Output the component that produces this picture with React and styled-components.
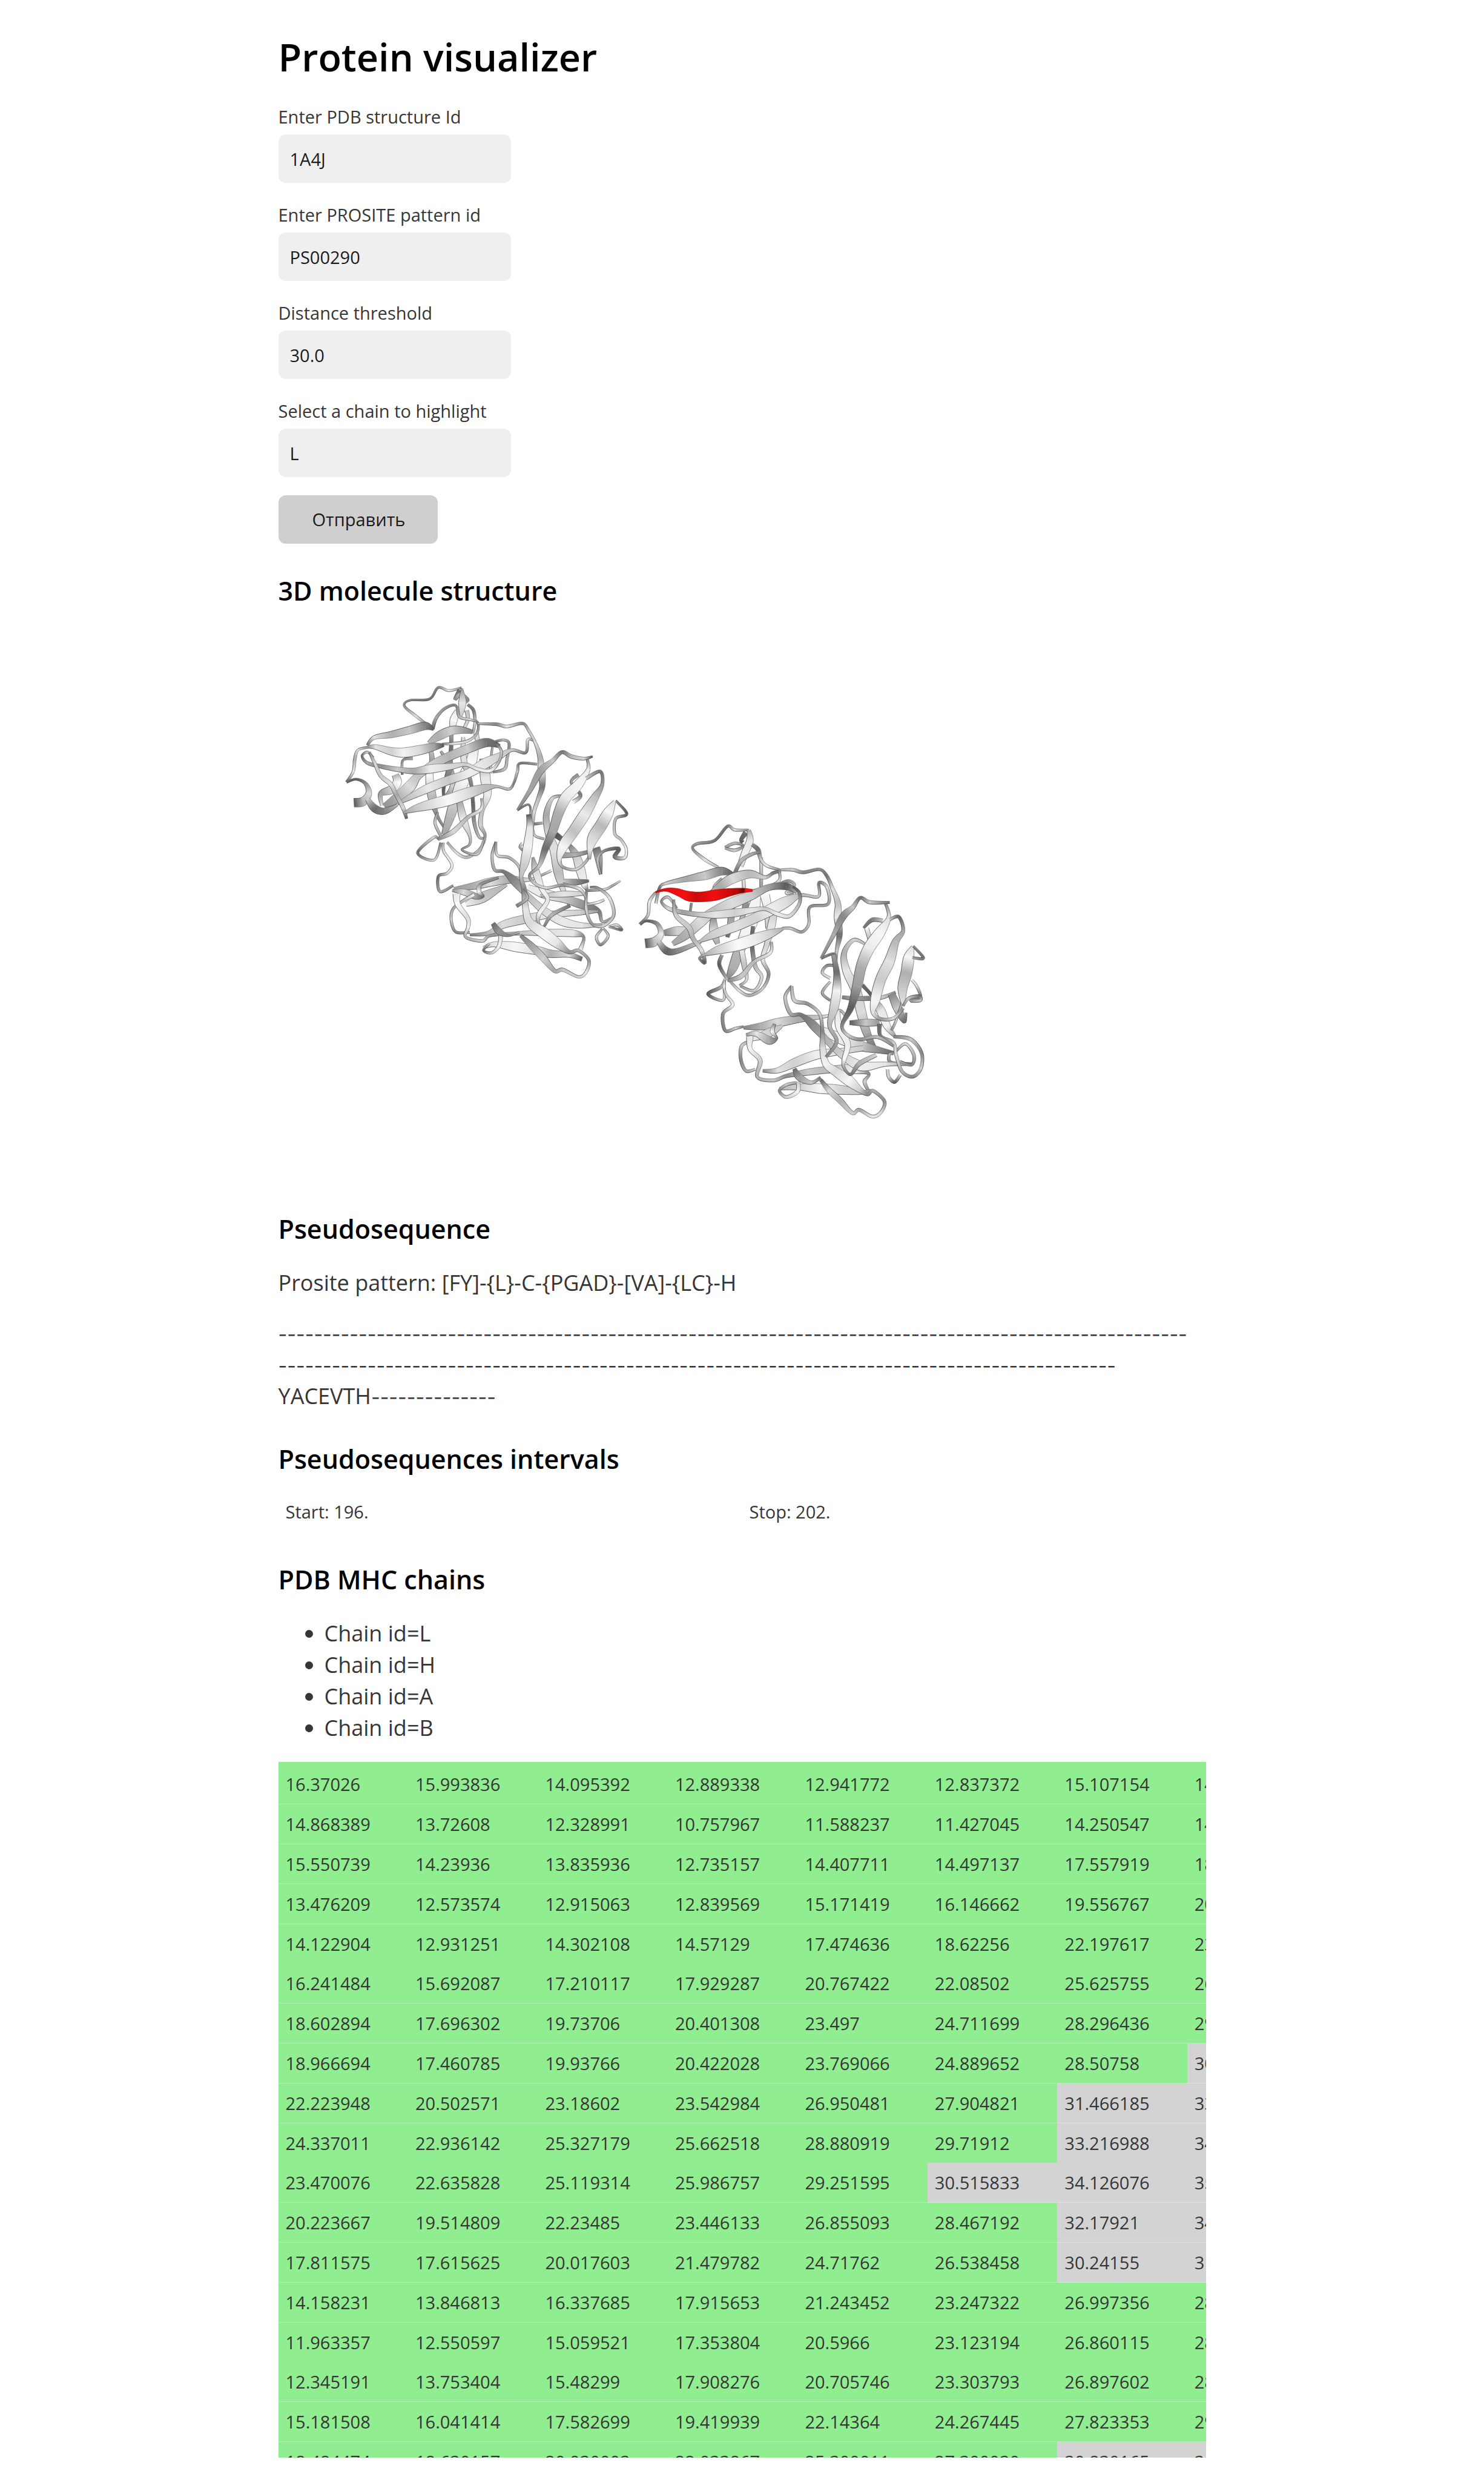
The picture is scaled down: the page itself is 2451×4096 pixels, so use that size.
import React from "react";
import styled, { createGlobalStyle } from "styled-components";

const GlobalStyle = createGlobalStyle`
  *, *::before, *::after { box-sizing: border-box; }
  html, body { margin: 0; padding: 0; background: #fff; }
  body {
    font-family: "Open Sans", "Noto Sans", sans-serif;
    font-size: 36px;
    line-height: 52px;
    color: #363636;
  }
`;

const Page = styled.main`
  max-width: 1532px;
  margin: 0 auto;
  padding: 54px 0 38px;
`;

const Title = styled.h1`
  margin: 0 0 40px;
  font-size: 63px;
  line-height: 80px;
  font-weight: 600;
  color: #000;
`;

const SectionTitle = styled.h2`
  margin: ${(p) => p.$top}px 0 ${(p) => p.$bottom}px;
  font-size: 43px;
  line-height: 56px;
  font-weight: 600;
  color: #000;
`;

const Form = styled.form`
  display: flex;
  flex-direction: column;
  align-items: flex-start;
  gap: 34px;
`;

const Field = styled.div`
  display: flex;
  flex-direction: column;
  gap: 10px;
  width: 384px;
`;

const Label = styled.label`
  font-size: 29px;
  line-height: 38px;
`;

const Input = styled.input`
  width: 100%;
  padding: 20px 19px;
  border: 0;
  border-radius: 12px;
  background: #efefef;
  color: #1b1b1b;
  font: inherit;
  font-size: 29px;
  line-height: 40px;
  height: 80px;
`;

const Submit = styled.button`
  margin-top: -4px;
  padding: 20px 56px;
  width: 263px;
  border: 0;
  border-radius: 12px;
  background: #cfcfcf;
  color: #1b1b1b;
  font: inherit;
  font-size: 29px;
  line-height: 40px;
`;

const Viewer = styled.svg`
  display: block;
  width: 100%;
  height: auto;
  margin: 20px 0;
`;

const Paragraph = styled.p`
  margin: 0 0 31px;
`;

const Sequence = styled.p`
  margin: 0;
  padding-right: 24px;
  overflow-wrap: anywhere;
`;

const Gap = styled.span`
  font-family: Inter, "Open Sans", sans-serif;
  font-size: 32px;
  line-height: 32px;
`;

const Intervals = styled.table`
  width: 100%;
  table-layout: fixed;
  border-spacing: 0;
  font-size: 29px;
  line-height: 38px;

  td { padding: 0 12px; }
`;

const ChainList = styled.ul`
  margin: 0 0 30px;
  padding-left: 76px;
`;

const MatrixScroll = styled.div`
  max-height: 1149px;
  overflow: hidden;
`;

const Matrix = styled.table`
  width: 112%;
  table-layout: fixed;
  border-spacing: 0;
  font-size: 29px;
  line-height: 38px;

  tr:nth-child(5n) td { border-bottom: 0; }
  tr:first-child td { padding-top: 18px; }
`;

const Distance = styled.td`
  padding: 14px 12px 13px;
  border-bottom: 1px solid rgba(255, 255, 255, 0.28);
  background: ${(p) => (p.$near ? "#90ee90" : "#d3d3d3")};
`;

const FIELDS = [
  { id: "pdb", label: "Enter PDB structure Id", value: "1A4J" },
  { id: "prosite", label: "Enter PROSITE pattern id", value: "PS00290" },
  { id: "threshold", label: "Distance threshold", value: "30.0" },
  { id: "chain", label: "Select a chain to highlight", value: "L" },
];

const THRESHOLD = 30;

const DISTANCES = [
  ["16.37026", "15.993836", "14.095392", "12.889338", "12.941772", "12.837372", "15.107154", "14"],
  ["14.868389", "13.72608", "12.328991", "10.757967", "11.588237", "11.427045", "14.250547", "14"],
  ["15.550739", "14.23936", "13.835936", "12.735157", "14.407711", "14.497137", "17.557919", "18"],
  ["13.476209", "12.573574", "12.915063", "12.839569", "15.171419", "16.146662", "19.556767", "20"],
  ["14.122904", "12.931251", "14.302108", "14.57129", "17.474636", "18.62256", "22.197617", "23"],
  ["16.241484", "15.692087", "17.210117", "17.929287", "20.767422", "22.08502", "25.625755", "26"],
  ["18.602894", "17.696302", "19.73706", "20.401308", "23.497", "24.711699", "28.296436", "29"],
  ["18.966694", "17.460785", "19.93766", "20.422028", "23.769066", "24.889652", "28.50758", "30"],
  ["22.223948", "20.502571", "23.18602", "23.542984", "26.950481", "27.904821", "31.466185", "33"],
  ["24.337011", "22.936142", "25.327179", "25.662518", "28.880919", "29.71912", "33.216988", "34"],
  ["23.470076", "22.635828", "25.119314", "25.986757", "29.251595", "30.515833", "34.126076", "35"],
  ["20.223667", "19.514809", "22.23485", "23.446133", "26.855093", "28.467192", "32.17921", "34"],
  ["17.811575", "17.615625", "20.017603", "21.479782", "24.71762", "26.538458", "30.24155", "31"],
  ["14.158231", "13.846813", "16.337685", "17.915653", "21.243452", "23.247322", "26.997356", "28"],
  ["11.963357", "12.550597", "15.059521", "17.353804", "20.5966", "23.123194", "26.860115", "28"],
  ["12.345191", "13.753404", "15.48299", "17.908276", "20.705746", "23.303793", "26.897602", "28"],
  ["15.181508", "16.041414", "17.582699", "19.419939", "22.14364", "24.267445", "27.823353", "29"],
  ["18.484474", "18.630157", "20.930003", "22.033867", "25.300011", "27.300030", "30.830165", "30"],
];

/* Each ribbon is a list of [x, y, halfWidth, grey] points, drawn back to front. */
const LEFT = [
  /* vertical strands at the back */
  [[510, 385, 10, 190], [518, 440, 12, 140], [505, 510, 18, 245], [518, 610, 20, 170], [540, 690, 8, 120], [575, 750, 5, 120]],
  [[612, 290, 8, 170], [610, 380, 9, 80], [606, 470, 12, 130], [620, 560, 16, 200], [575, 620, 8, 100]],
  [[560, 395, 5, 150], [600, 470, 14, 130], [575, 560, 8, 60], [575, 610, 6, 80]],
  [[720, 385, 22, 230], [705, 450, 26, 250], [668, 530, 30, 245], [635, 610, 26, 210], [605, 700, 22, 170], [575, 785, 12, 150]],
  [[668, 330, 8, 210], [672, 440, 14, 220], [705, 540, 8, 110], [716, 640, 8, 70], [722, 730, 8, 130], [745, 795, 6, 170], [770, 800, 4, 150]],
  [[770, 430, 22, 130], [775, 520, 24, 225], [785, 600, 18, 230], [760, 670, 10, 180], [752, 740, 10, 200], [774, 790, 6, 130], [750, 850, 6, 190], [690, 890, 6, 170], [640, 872, 6, 220], [590, 820, 5, 150]],
  [[650, 630, 14, 150], [668, 710, 18, 230], [700, 790, 7, 190], [698, 832, 5, 150], [662, 856, 4, 120], [735, 876, 6, 190], [768, 810, 5, 150]],
  [[809, 375, 4, 150], [803, 430, 5, 180], [800, 500, 5, 200]],
  [[727, 290, 12, 230], [738, 350, 10, 200]],
  [[685, 205, 10, 180], [690, 250, 8, 200], [665, 300, 6, 220]],
  /* upper loops */
  [[520, 292, 5, 90], [440, 232, 6, 220], [384, 185, 5, 120], [410, 158, 4, 110], [505, 152, 5, 90], [547, 99, 5, 110], [600, 113, 5, 240], [660, 99, 4, 120]],
  [[650, 110, 8, 80], [630, 152, 8, 130], [655, 130, 8, 170], [690, 155, 7, 110], [675, 172, 4, 160]],
  [[640, 205, 10, 230], [622, 250, 18, 245], [615, 300, 10, 210]],
  [[662, 103, 4, 130], [664, 170, 18, 225], [657, 234, 5, 190]],
  [[690, 178, 6, 110], [718, 205, 7, 90], [725, 262, 6, 210], [715, 310, 5, 150]],
  [[520, 292, 8, 80], [538, 240, 7, 150], [580, 196, 6, 130], [632, 182, 5, 110], [650, 235, 6, 170], [700, 248, 5, 220], [738, 262, 5, 100], [735, 312, 5, 160], [690, 348, 6, 210], [620, 360, 6, 220], [565, 362, 4, 110]],
  /* link across the top right */
  [[740, 267, 4, 180], [830, 270, 7, 110], [880, 280, 7, 230], [955, 266, 6, 110], [985, 300, 6, 190], [1018, 360, 7, 210], [1040, 425, 12, 160], [1046, 490, 17, 225], [1050, 560, 13, 90], [1030, 620, 9, 180], [1010, 680, 8, 210], [1003, 760, 5, 120]],
  [[820, 352, 5, 70], [862, 343, 5, 180], [890, 360, 6, 120], [880, 430, 6, 160], [868, 478, 7, 180], [810, 494, 4, 100]],
  [[930, 670, 5, 90], [975, 645, 4, 110], [992, 655, 4, 90], [994, 700, 5, 210]],
  /* front strands */
  [[525, 295, 5, 60], [485, 278, 18, 110], [410, 297, 18, 190], [320, 318, 15, 160], [238, 332, 9, 220], [205, 368, 6, 90]],
  [[715, 306, 8, 110], [660, 297, 16, 150], [610, 300, 20, 200], [550, 325, 20, 160], [500, 358, 8, 170]],
  [[205, 376, 5, 120], [245, 376, 11, 220], [320, 396, 18, 200], [380, 402, 22, 240], [460, 390, 22, 210], [530, 374, 17, 140], [575, 368, 6, 50]],
  [[205, 378, 5, 130], [160, 390, 5, 220], [145, 430, 7, 160], [137, 490, 6, 230], [105, 540, 6, 70]],
  [[105, 540, 5, 80], [150, 526, 5, 60], [195, 545, 8, 120], [212, 590, 14, 210], [185, 630, 20, 170], [140, 636, 20, 60]],
  [[340, 505, 16, 160], [350, 540, 20, 250], [320, 575, 20, 200], [270, 595, 12, 140], [275, 650, 6, 220]],
  [[425, 430, 6, 150], [380, 435, 5, 110], [372, 470, 5, 180], [374, 505, 5, 70]],
  [[205, 618, 10, 200], [240, 662, 18, 80], [290, 675, 14, 110], [350, 645, 6, 170]],
  [[285, 650, 10, 130], [340, 620, 22, 150], [410, 560, 26, 215], [450, 510, 18, 180], [520, 460, 20, 200], [600, 420, 20, 165], [690, 385, 20, 195], [780, 355, 20, 90], [845, 372, 8, 70]],
  [[350, 642, 5, 160], [420, 605, 14, 190], [500, 568, 20, 230], [600, 530, 20, 190], [690, 500, 20, 235], [770, 455, 24, 225], [840, 420, 16, 200], [905, 390, 7, 190], [970, 402, 6, 100], [980, 342, 6, 220], [1005, 345, 4, 120]],
  [[235, 425, 4, 130], [205, 400, 5, 200], [180, 418, 5, 80], [205, 450, 7, 150], [270, 466, 9, 120], [350, 480, 11, 190], [430, 488, 14, 150], [510, 478, 20, 235], [600, 468, 15, 210], [680, 458, 8, 200], [740, 480, 8, 230], [800, 486, 8, 240], [840, 445, 6, 160], [852, 395, 6, 190], [825, 355, 5, 60]],
  [[215, 400, 5, 110], [240, 450, 7, 210], [270, 510, 9, 190], [318, 550, 10, 220], [345, 600, 9, 150], [378, 660, 9, 210], [395, 710, 6, 60]],
  [[385, 682, 5, 150], [440, 662, 16, 190], [520, 642, 24, 220], [600, 622, 26, 250], [690, 592, 26, 215], [770, 568, 18, 175], [830, 560, 6, 170], [888, 572, 6, 180], [912, 545, 5, 100], [930, 490, 6, 190], [942, 452, 5, 90], [1025, 456, 5, 140]],
  [[758, 615, 6, 150], [755, 665, 7, 230], [690, 705, 8, 170], [620, 770, 11, 210], [545, 806, 7, 110]],
  [[545, 680, 5, 120], [532, 730, 6, 200], [560, 792, 6, 150]],
  [[560, 822, 5, 110], [528, 903, 5, 210], [448, 870, 6, 80], [525, 798, 6, 210], [548, 805, 4, 90]],
  [[572, 822, 5, 160], [574, 862, 6, 210], [614, 925, 6, 240], [590, 965, 6, 200], [548, 980, 6, 80], [556, 1050, 6, 150], [620, 1022, 5, 120]],
  /* lower-right lobe, back */
  [[1225, 505, 8, 130], [1190, 540, 6, 140], [1235, 600, 8, 100], [1200, 632, 9, 240]],
  [[1010, 735, 6, 90], [1052, 730, 5, 170]],
  [[1005, 760, 5, 160], [1015, 790, 5, 190], [1060, 805, 5, 150]],
  [[955, 825, 7, 230], [942, 842, 5, 150], [958, 860, 5, 130]],
  [[1150, 604, 5, 120], [1098, 616, 8, 200], [1070, 690, 14, 150], [1078, 770, 16, 200], [1110, 860, 22, 220], [1128, 960, 22, 175], [1150, 1040, 12, 210], [1182, 1110, 9, 90]],
  [[1115, 785, 14, 50], [1175, 830, 10, 90], [1212, 880, 18, 190], [1235, 950, 22, 225], [1255, 1020, 14, 235], [1268, 1040, 6, 100]],
  [[1140, 880, 14, 130], [1210, 878, 10, 160], [1285, 862, 8, 90]],
  [[1150, 1000, 8, 190], [1210, 1006, 14, 120], [1275, 1000, 5, 70]],
  [[1270, 1045, 5, 110], [1350, 1040, 5, 210], [1390, 1022, 5, 140], [1428, 1000, 3, 230]],
  [[980, 1030, 12, 230], [1060, 1060, 22, 235], [1160, 1085, 18, 190], [1240, 1110, 20, 130], [1320, 1138, 10, 90], [1340, 1190, 6, 160], [1385, 1175, 6, 120]],
  [[1040, 1070, 6, 170], [1150, 1062, 14, 225], [1250, 1060, 8, 200]],
  [[700, 1252, 5, 100], [790, 1244, 10, 170], [860, 1205, 17, 215], [960, 1180, 20, 195], [1080, 1158, 16, 235], [1230, 1148, 12, 200], [1320, 1142, 5, 140]],
  [[622, 1036, 5, 140], [720, 1024, 16, 160], [800, 1006, 20, 215], [890, 994, 18, 155], [990, 994, 7, 210], [1055, 970, 5, 150], [1095, 952, 5, 230]],
  [[680, 1110, 10, 235], [760, 1078, 24, 190], [850, 1034, 10, 170], [880, 1020, 4, 180]],
  [[615, 1045, 5, 130], [670, 1052, 14, 210], [730, 1072, 14, 140], [765, 1072, 5, 80], [745, 1050, 10, 240], [755, 1015, 8, 120], [840, 985, 5, 120]],
  [[720, 1065, 8, 240], [665, 1095, 6, 170], [620, 1130, 6, 150], [610, 1180, 6, 200], [632, 1238, 6, 110], [700, 1240, 5, 150]],
  [[636, 1060, 18, 225], [642, 1110, 13, 250], [690, 1175, 10, 210], [692, 1215, 8, 240], [680, 1262, 6, 160], [760, 1280, 7, 200], [800, 1255, 6, 130], [930, 1245, 8, 180], [1080, 1242, 16, 220], [1200, 1245, 16, 225], [1250, 1262, 6, 110], [1235, 1320, 10, 240]],
  [[765, 1312, 6, 190], [820, 1296, 12, 225], [920, 1308, 22, 245], [1030, 1326, 20, 215], [1090, 1340, 18, 160], [1180, 1345, 12, 215], [1242, 1365, 10, 70]],
  [[850, 1256, 10, 220], [840, 1305, 8, 240], [805, 1336, 6, 190], [766, 1325, 5, 80], [795, 1292, 5, 190]],
  [[812, 1198, 10, 80], [840, 1235, 15, 130], [885, 1254, 6, 110], [940, 1240, 5, 160]],
  [[826, 818, 5, 110], [808, 880, 6, 190], [820, 948, 7, 150], [865, 958, 8, 90], [920, 1005, 20, 120], [970, 1060, 14, 170], [1060, 1140, 18, 210], [1150, 1190, 20, 230], [1240, 1208, 13, 225], [1340, 1205, 5, 160]],
  [[826, 818, 5, 120], [832, 880, 6, 210], [890, 892, 6, 160], [940, 938, 6, 190], [952, 1020, 6, 120]],
  [[1265, 1040, 5, 90], [1262, 1130, 7, 210], [1290, 1200, 6, 130], [1345, 1210, 6, 210], [1395, 1160, 7, 170], [1375, 1080, 7, 220], [1320, 1035, 6, 130], [1280, 1030, 4, 100]],
  [[1340, 1224, 5, 130], [1312, 1262, 6, 210], [1332, 1298, 6, 110], [1368, 1258, 6, 200], [1345, 1222, 4, 140]],
  [[1370, 1215, 5, 180], [1410, 1206, 6, 210], [1434, 1230, 5, 70], [1375, 1215, 4, 160]],
  [[1270, 1110, 5, 170], [1320, 1100, 6, 235], [1350, 1088, 5, 190]],
  [[1005, 890, 5, 130], [1020, 960, 18, 215], [1050, 1040, 12, 240], [1076, 1090, 10, 225], [1034, 1155, 10, 240], [1032, 1195, 6, 150], [1055, 1215, 5, 90], [1095, 1160, 8, 170], [1185, 1115, 7, 90]],
  /* lower-right lobe, front */
  [[1265, 425, 5, 100], [1272, 480, 9, 235], [1225, 550, 22, 245], [1165, 610, 26, 230], [1130, 680, 24, 160], [1100, 770, 20, 150], [1065, 850, 16, 80], [1035, 930, 8, 190], [990, 972, 6, 110], [1010, 1010, 6, 190], [1070, 1033, 6, 210], [1150, 1020, 6, 120], [1230, 1038, 7, 220], [1262, 1080, 5, 140]],
  [[1262, 522, 8, 190], [1330, 490, 7, 90], [1340, 550, 8, 130], [1305, 610, 18, 180], [1255, 690, 26, 230], [1200, 770, 26, 180], [1150, 840, 24, 245], [1132, 905, 9, 220], [1155, 938, 6, 130], [1215, 946, 6, 210], [1265, 905, 6, 160], [1285, 862, 5, 120]],
  [[1310, 845, 18, 80], [1322, 890, 18, 150], [1332, 970, 7, 90]],
  [[1332, 970, 5, 130], [1318, 900, 6, 190], [1350, 860, 6, 110], [1420, 850, 8, 60], [1400, 888, 9, 90], [1448, 892, 7, 220], [1455, 850, 6, 240], [1430, 808, 6, 180], [1400, 780, 6, 190], [1405, 710, 6, 170], [1458, 688, 6, 60], [1405, 626, 5, 120]],
  [[1400, 628, 6, 220], [1370, 680, 24, 245], [1335, 740, 28, 170], [1295, 800, 26, 210], [1280, 855, 13, 230], [1278, 900, 6, 140]],
  [[930, 670, 5, 110], [990, 580, 10, 150], [1040, 490, 16, 140], [1100, 440, 10, 190], [1145, 400, 8, 90], [1190, 420, 9, 170], [1250, 430, 7, 210], [1293, 420, 4, 50]],
  [[985, 690, 11, 60], [990, 750, 16, 225], [980, 840, 22, 240], [965, 915, 20, 200], [948, 980, 9, 180], [962, 1040, 12, 110], [970, 1130, 15, 225], [990, 1195, 20, 210], [1060, 1245, 26, 245], [1120, 1290, 22, 225], [1180, 1332, 9, 120], [1225, 1325, 7, 170], [1275, 1370, 7, 130], [1262, 1425, 7, 225], [1225, 1448, 6, 200], [1150, 1415, 8, 190], [1110, 1420, 9, 150], [1055, 1360, 16, 200], [1000, 1305, 15, 150], [945, 1255, 7, 110]],
  [[925, 1118, 8, 100], [978, 1080, 6, 180], [955, 1040, 5, 100]],
];

const RIGHT = [
  [[460, 530, 12, 120], [462, 590, 20, 215], [480, 650, 10, 150]],
  [[600, 350, 7, 225], [605, 430, 9, 180], [610, 480, 14, 120], [590, 580, 18, 220]],
  [[545, 480, 16, 110], [540, 560, 14, 160], [525, 620, 8, 80]],
  [[660, 440, 20, 240], [640, 530, 32, 245], [610, 610, 28, 240], [580, 680, 24, 170], [550, 760, 20, 160], [525, 805, 7, 110]],
  [[700, 430, 22, 245], [715, 500, 18, 225], [720, 580, 16, 190]],
  [[745, 500, 14, 190], [730, 570, 18, 225], [710, 650, 12, 200], [690, 720, 9, 230], [718, 785, 7, 110], [690, 850, 6, 190], [630, 882, 6, 150], [580, 860, 6, 220], [530, 810, 5, 120]],
  [[645, 570, 8, 90], [640, 650, 9, 60], [655, 750, 9, 170], [685, 800, 7, 210], [650, 860, 6, 190], [585, 840, 5, 140]],
  [[592, 680, 12, 230], [605, 750, 12, 180], [615, 810, 6, 210], [582, 838, 5, 140]],
  [[683, 260, 7, 220], [683, 395, 7, 140]],
  [[500, 355, 5, 140], [465, 390, 6, 210], [470, 420, 6, 180]],
  [[483, 305, 5, 180], [420, 270, 7, 220], [364, 222, 5, 110], [385, 198, 6, 140], [465, 184, 6, 90], [525, 120, 6, 90], [560, 136, 6, 220], [625, 136, 4, 120]],
  [[514, 215, 6, 140], [560, 196, 6, 170], [600, 208, 5, 110], [560, 228, 7, 190], [514, 218, 5, 140]],
  [[612, 148, 12, 90], [590, 180, 8, 70], [598, 192, 8, 60]],
  [[625, 136, 8, 160], [630, 185, 16, 230], [605, 245, 16, 240], [585, 300, 14, 200]],
  [[640, 202, 7, 120], [668, 225, 10, 80], [682, 270, 7, 190], [710, 298, 6, 230], [768, 316, 5, 110]],
  [[560, 330, 8, 80], [590, 275, 8, 170], [640, 245, 7, 150], [678, 238, 4, 100]],
  [[768, 316, 4, 170], [830, 316, 7, 190], [880, 327, 7, 110], [955, 314, 6, 120], [990, 345, 7, 90], [1015, 400, 8, 220], [1040, 465, 13, 180], [1040, 530, 17, 230], [1048, 610, 13, 80], [1035, 680, 7, 190], [1030, 750, 6, 140]],
  [[770, 378, 5, 110], [810, 366, 6, 130], [838, 385, 6, 170], [800, 420, 7, 210], [835, 418, 5, 130]],
  [[962, 715, 5, 110], [1025, 695, 5, 90], [1030, 750, 5, 210]],
  [[560, 340, 5, 60], [500, 322, 18, 110], [420, 342, 19, 190], [330, 358, 12, 150], [235, 378, 6, 200], [208, 400, 6, 80], [192, 468, 6, 210]],
  [[775, 322, 6, 110], [740, 330, 7, 90], [700, 350, 8, 200], [630, 335, 18, 170], [550, 355, 22, 210], [490, 390, 18, 150], [450, 415, 6, 170]],
  [[766, 318, 5, 120], [768, 362, 6, 210], [720, 392, 7, 180], [640, 412, 6, 230]],
  [[190, 418, 5, 130], [162, 460, 7, 230], [155, 520, 6, 190], [118, 562, 7, 60]],
  [[118, 560, 5, 90], [150, 546, 5, 60], [198, 560, 9, 120], [215, 605, 13, 230], [185, 640, 20, 180], [142, 648, 20, 60]],
  [[358, 465, 5, 120], [350, 520, 5, 110]],
  [[230, 600, 12, 110], [290, 592, 20, 200], [340, 590, 14, 210]],
  [[205, 640, 10, 190], [240, 680, 16, 70], [290, 682, 12, 110], [400, 640, 8, 190]],
  [[270, 650, 10, 150], [330, 610, 20, 160], [400, 550, 24, 215], [460, 505, 20, 180], [550, 465, 24, 215], [640, 430, 20, 190], [720, 395, 14, 140], [800, 390, 16, 60], [850, 415, 8, 160]],
  [[395, 640, 5, 170], [460, 608, 18, 200], [560, 572, 22, 220], [650, 535, 22, 200], [730, 495, 26, 235], [800, 460, 24, 215], [870, 430, 8, 170], [950, 436, 6, 190], [952, 374, 6, 90], [990, 395, 7, 210], [995, 470, 6, 140], [910, 484, 6, 120], [905, 560, 6, 190], [872, 596, 6, 130], [820, 580, 6, 190], [780, 580, 5, 170]],
  [[290, 490, 4, 120], [250, 440, 6, 190], [218, 458, 5, 110], [250, 490, 8, 210], [320, 508, 10, 140], [400, 518, 11, 190], [470, 518, 16, 225], [560, 510, 18, 200], [640, 498, 12, 225], [700, 492, 8, 190], [760, 516, 9, 235], [815, 524, 8, 210], [860, 470, 7, 170], [860, 420, 7, 90], [830, 392, 5, 60]],
  [[275, 450, 5, 120], [285, 520, 9, 200], [345, 575, 12, 190], [365, 625, 10, 160], [405, 680, 9, 220], [420, 735, 7, 60], [395, 715, 5, 110], [415, 700, 5, 160]],
  [[418, 700, 5, 160], [480, 678, 18, 200], [570, 655, 26, 250], [650, 630, 26, 235], [730, 602, 18, 200], [785, 582, 5, 160]],
  [[730, 640, 6, 150], [725, 690, 7, 230], [650, 730, 8, 170], [590, 795, 11, 190], [525, 815, 6, 110]],
  [[500, 700, 7, 140], [488, 745, 8, 60], [525, 810, 6, 170]],
  [[515, 808, 5, 220], [495, 845, 7, 150], [435, 876, 7, 60], [505, 904, 5, 200], [510, 840, 6, 240], [512, 812, 4, 160]],
  [[510, 850, 5, 200], [520, 880, 6, 190], [550, 925, 7, 240], [505, 965, 7, 120], [515, 1040, 7, 110], [565, 1030, 6, 200], [600, 1022, 4, 100]],
  [[1160, 578, 5, 90], [1200, 542, 9, 100], [1250, 545, 8, 190]],
  [[1175, 580, 10, 240], [1190, 630, 10, 170]],
  [[1038, 750, 6, 140], [990, 748, 6, 110], [968, 780, 6, 190], [1005, 805, 6, 220]],
  [[1005, 820, 5, 190], [968, 870, 6, 150], [1005, 905, 5, 120]],
  [[1175, 655, 5, 170], [1115, 632, 8, 200], [1070, 690, 12, 160], [1080, 770, 18, 225], [1125, 860, 22, 200], [1150, 960, 22, 215], [1175, 1050, 18, 150], [1215, 1130, 10, 80]],
  [[1155, 835, 8, 80], [1200, 885, 8, 60], [1240, 950, 20, 225], [1270, 1020, 16, 240], [1305, 1065, 7, 140]],
  [[1060, 890, 7, 100], [1110, 895, 9, 150], [1190, 895, 10, 100], [1250, 890, 8, 190], [1310, 868, 6, 120]],
  [[1095, 1005, 9, 60], [1170, 1005, 16, 190], [1235, 1005, 14, 130]],
  [[1290, 875, 16, 110], [1320, 940, 20, 190], [1350, 1000, 8, 80], [1358, 960, 5, 120]],
  [[960, 1035, 14, 225], [1050, 1075, 24, 240], [1150, 1110, 22, 190], [1230, 1128, 14, 120], [1300, 1142, 8, 80]],
  [[1300, 1140, 6, 110], [1280, 1150, 6, 170], [1290, 1185, 7, 110], [1385, 1190, 5, 150]],
  [[690, 1222, 6, 110], [760, 1220, 12, 220], [840, 1185, 20, 200], [940, 1150, 20, 235], [1050, 1135, 14, 220], [1160, 1120, 12, 190]],
  [[600, 1028, 6, 110], [680, 1022, 16, 160], [760, 1005, 20, 210], [860, 988, 16, 150], [990, 975, 6, 210], [1050, 950, 6, 150], [1085, 990, 5, 220]],
  [[640, 1080, 8, 235], [720, 1050, 20, 200], [780, 1020, 6, 190]],
  [[612, 1060, 6, 130], [660, 1055, 12, 225], [720, 1085, 18, 150], [755, 1075, 5, 100], [735, 1045, 10, 245], [745, 1010, 6, 110]],
  [[630, 1090, 6, 170], [592, 1110, 7, 190], [588, 1170, 7, 110], [612, 1222, 7, 150], [655, 1215, 5, 190]],
  [[630, 1070, 16, 225], [632, 1125, 10, 240], [678, 1175, 10, 200], [665, 1250, 7, 160], [740, 1265, 7, 190], [800, 1245, 8, 120], [900, 1228, 14, 190], [1020, 1215, 16, 170], [1120, 1215, 20, 245], [1185, 1235, 6, 110], [1165, 1270, 8, 200], [1182, 1310, 6, 120]],
  [[768, 1302, 6, 170], [860, 1295, 14, 200], [960, 1302, 22, 245], [1060, 1308, 20, 200], [1150, 1318, 10, 190], [1195, 1310, 5, 120]],
  [[855, 1270, 9, 190], [852, 1315, 9, 240], [800, 1340, 7, 200], [768, 1312, 6, 110], [800, 1285, 6, 190], [845, 1275, 5, 160]],
  [[838, 1212, 8, 80], [860, 1250, 16, 140], [915, 1275, 8, 190], [960, 1252, 6, 90]],
  [[825, 840, 6, 110], [795, 890, 7, 190], [820, 965, 8, 150], [870, 970, 8, 90], [930, 1020, 20, 120], [980, 1075, 14, 160], [1060, 1150, 16, 200], [1150, 1200, 22, 235], [1260, 1192, 10, 225], [1385, 1192, 6, 120]],
  [[825, 840, 6, 160], [838, 905, 8, 200], [900, 920, 7, 120], [955, 965, 7, 200], [968, 1040, 8, 110], [970, 1120, 14, 210], [985, 1190, 16, 240], [1030, 1225, 20, 210], [1090, 1265, 24, 245], [1140, 1305, 14, 200], [1180, 1328, 7, 110], [1205, 1312, 7, 160], [1258, 1360, 7, 120], [1240, 1410, 7, 210], [1200, 1428, 7, 230], [1140, 1398, 7, 150], [1108, 1412, 8, 200], [1050, 1355, 13, 160], [1000, 1310, 12, 210], [960, 1262, 7, 70]],
  [[1305, 1140, 5, 110], [1355, 1100, 6, 210], [1395, 1150, 7, 170], [1385, 1195, 6, 110], [1330, 1180, 5, 150]],
  [[1272, 1215, 6, 210], [1278, 1250, 7, 200], [1305, 1272, 7, 60], [1332, 1240, 6, 210]],
  [[1235, 1010, 10, 80], [1240, 1065, 7, 90], [1300, 1095, 7, 190], [1312, 1150, 7, 220], [1340, 1225, 7, 160], [1390, 1248, 7, 110], [1428, 1210, 7, 200], [1430, 1140, 7, 110], [1380, 1080, 8, 190], [1300, 1068, 6, 100]],
  [[1345, 900, 5, 150], [1310, 1000, 5, 190], [1290, 1040, 5, 120]],
  [[1040, 950, 9, 225], [1045, 1020, 16, 240], [1085, 1100, 14, 235], [1070, 1170, 10, 245], [1068, 1205, 6, 150], [1100, 1238, 6, 90], [1140, 1190, 10, 160], [1220, 1150, 8, 200]],
  [[1262, 465, 6, 110], [1278, 530, 9, 220], [1235, 600, 24, 245], [1185, 670, 26, 230], [1150, 750, 24, 160], [1130, 840, 22, 140], [1100, 940, 14, 60], [1060, 1018, 7, 110], [1085, 1060, 7, 200], [1140, 1080, 7, 120], [1225, 1070, 7, 180], [1300, 1110, 5, 120]],
  [[1282, 540, 6, 190], [1325, 528, 7, 70], [1345, 590, 8, 150], [1310, 640, 16, 170], [1280, 730, 24, 220], [1240, 810, 24, 190], [1215, 900, 22, 245], [1205, 960, 9, 220], [1240, 988, 7, 130], [1300, 985, 7, 210], [1345, 940, 6, 120]],
  [[1390, 660, 6, 210], [1372, 710, 24, 245], [1360, 780, 26, 160], [1342, 850, 22, 190], [1345, 920, 9, 220]],
  [[1392, 660, 5, 110], [1440, 714, 6, 90], [1388, 712, 5, 150]],
  [[1385, 812, 5, 230], [1408, 840, 6, 210], [1425, 890, 6, 80], [1380, 905, 7, 130], [1425, 905, 6, 190], [1420, 885, 6, 90], [1370, 895, 6, 190], [1345, 930, 5, 120]],
  [[962, 715, 5, 110], [1020, 610, 9, 160], [1065, 525, 16, 110], [1110, 485, 10, 190], [1145, 442, 7, 80], [1190, 462, 8, 190], [1282, 463, 5, 90]],
  [[1020, 700, 9, 140], [1035, 780, 14, 80], [1035, 860, 20, 240], [1022, 940, 20, 200], [1002, 1020, 9, 170], [1035, 1090, 8, 140], [985, 1160, 6, 110]],
];

const HIGHLIGHT = [[190, 416, 3], [240, 406, 7], [290, 416, 16], [340, 434, 22], [400, 438, 22], [470, 430, 24], [540, 417, 17], [600, 409, 10], [642, 409, 5]];

function sample(points) {
  const out = [];
  for (let i = 0; i < points.length - 1; i++) {
    const p0 = points[Math.max(i - 1, 0)];
    const p1 = points[i];
    const p2 = points[i + 1];
    const p3 = points[Math.min(i + 2, points.length - 1)];
    for (let s = 0; s < 8; s++) {
      const t = s / 8;
      out.push([0, 1, 2].map((k) =>
        0.5 * (2 * p1[k] + (p2[k] - p0[k]) * t
          + (2 * p0[k] - 5 * p1[k] + 4 * p2[k] - p3[k]) * t * t
          + (3 * p1[k] - p0[k] - 3 * p2[k] + p3[k]) * t * t * t)));
    }
  }
  out.push(points[points.length - 1]);
  return out;
}

/* Outline of every stretch between two control points, so each can take its own shade. */
function stretches(points) {
  const line = sample(points);
  const sides = line.map((p, i) => {
    const a = line[Math.max(i - 1, 0)];
    const b = line[Math.min(i + 1, line.length - 1)];
    const len = Math.hypot(b[0] - a[0], b[1] - a[1]) || 1;
    const nx = (-(b[1] - a[1]) / len) * p[2];
    const ny = ((b[0] - a[0]) / len) * p[2];
    return [[p[0] + nx, p[1] + ny], [p[0] - nx, p[1] - ny]];
  });
  const join = (list) => list.map((p) => `${p[0].toFixed(1)},${p[1].toFixed(1)}`).join("L");
  const parts = [];
  for (let i = 0; i < points.length - 1; i++) {
    const cut = sides.slice(i * 8, i * 8 + 9);
    parts.push({
      fill: `M${join(cut.map((s) => s[0]))}L${join(cut.map((s) => s[1]).reverse())}Z`,
      lower: `M${join(cut.map((s) => s[0]))}`,
      upper: `M${join(cut.map((s) => s[1]))}`,
    });
  }
  return parts;
}

const grey = (v) => {
  const lit = Math.min(250, Math.round(255 - (255 - v) * 0.85));
  return `rgb(${lit},${lit},${lit})`;
};

function Ribbon({ id, points }) {
  return (
    <g fill="none">
      {stretches(points).map((part, i) => {
        const a = points[i];
        const b = points[i + 1];
        return (
          <React.Fragment key={i}>
            <linearGradient id={`${id}-${i}`} gradientUnits="userSpaceOnUse" x1={a[0]} y1={a[1]} x2={b[0]} y2={b[1]}>
              <stop offset="0" stopColor={grey(a[3])} />
              <stop offset="1" stopColor={grey(b[3])} />
            </linearGradient>
            <path d={part.fill} fill={`url(#${id}-${i})`} stroke={`url(#${id}-${i})`} strokeWidth="0.8" />
            <path d={part.lower} stroke="#4c4c4c" strokeWidth="2.4" />
            <path d={part.upper} stroke="#7a7a7a" strokeWidth="2.2" />
          </React.Fragment>
        );
      })}
    </g>
  );
}

function Molecule() {
  return (
    <Viewer viewBox="480 1070 1600 1000" role="img" aria-label="3D molecule structure">
      <g transform="translate(560 1150) scale(0.3571 0.3699)">
        {LEFT.map((points, i) => <Ribbon key={i} id={`l${i}`} points={points} />)}
      </g>
      <g transform="translate(1060 1380) scale(0.3699 0.3827)">
        {RIGHT.map((points, i) => <Ribbon key={i} id={`r${i}`} points={points} />)}
        <defs>
          <linearGradient id="red" x1="0" x2="1" y1="0" y2="0">
            <stop offset="0" stopColor="#e00808" />
            <stop offset="0.3" stopColor="#f80f0f" />
            <stop offset="0.42" stopColor="#c80c0c" />
            <stop offset="0.6" stopColor="#f50f0f" />
            <stop offset="0.85" stopColor="#b00909" />
            <stop offset="0.91" stopColor="#5a0505" />
            <stop offset="0.93" stopColor="#f01010" />
            <stop offset="1" stopColor="#f01010" />
          </linearGradient>
        </defs>
        <path
          d={(() => {
            const line = sample(HIGHLIGHT);
            const top = line.map((p) => `${p[0]},${p[1] - p[2]}`);
            const bottom = line.map((p) => `${p[0]},${p[1] + p[2]}`).reverse();
            return `M${top.concat(bottom).join("L")}Z`;
          })()}
          fill="url(#red)"
          stroke="#a00808"
          strokeWidth="2"
        />
      </g>
    </Viewer>
  );
}

export default function App() {
  return (
    <>
      <GlobalStyle />
      <Page>
        <Title>Protein visualizer</Title>
        <Form onSubmit={(e) => e.preventDefault()}>
          {FIELDS.map((f) => (
            <Field key={f.id}>
              <Label htmlFor={f.id}>{f.label}</Label>
              <Input id={f.id} type="text" defaultValue={f.value} />
            </Field>
          ))}
          <Submit type="submit">Отправить</Submit>
        </Form>

        <SectionTitle $top={50} $bottom={0}>3D molecule structure</SectionTitle>
        <Molecule />

        <SectionTitle $top={0} $bottom={35}>Pseudosequence</SectionTitle>
        <Paragraph>{"Prosite pattern: [FY]-{L}-C-{PGAD}-[VA]-{LC}-H"}</Paragraph>
        <Sequence>
          <Gap>{"-".repeat(196)}</Gap>YACEVTH<Gap>{"-".repeat(14)}</Gap>
        </Sequence>

        <SectionTitle $top={50} $bottom={40}>Pseudosequences intervals</SectionTitle>
        <Intervals>
          <tbody>
            <tr>
              <td>Start: 196.</td>
              <td>Stop: 202.</td>
            </tr>
          </tbody>
        </Intervals>

        <SectionTitle $top={65} $bottom={35}>PDB MHC chains</SectionTitle>
        <ChainList>
          {["L", "H", "A", "B"].map((id) => <li key={id}>Chain id={id}</li>)}
        </ChainList>

        <MatrixScroll>
          <Matrix>
            <tbody>
              {DISTANCES.map((row, r) => (
                <tr key={r}>
                  {row.map((value, c) => (
                    <Distance key={c} $near={Number(value) < THRESHOLD}>{value}</Distance>
                  ))}
                </tr>
              ))}
            </tbody>
          </Matrix>
        </MatrixScroll>
      </Page>
    </>
  );
}
